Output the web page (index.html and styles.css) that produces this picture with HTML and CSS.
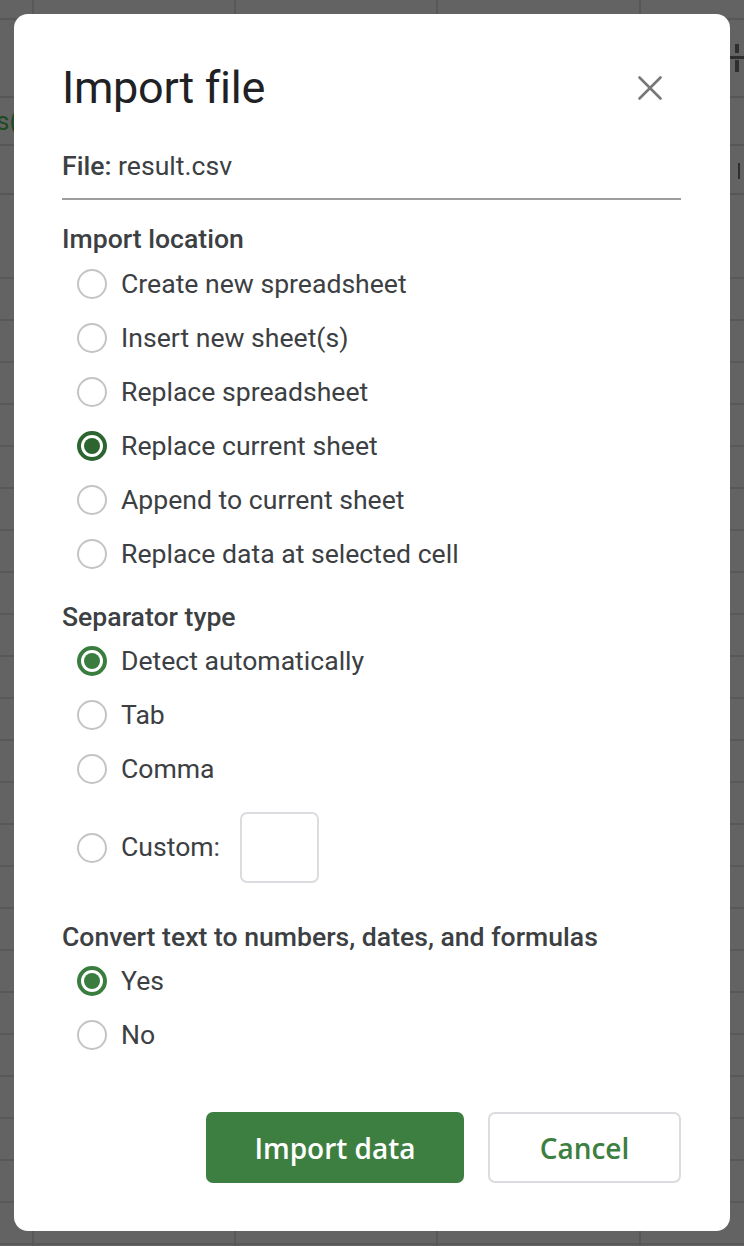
FILE: index.html
```html
<!DOCTYPE html>
<html lang="en">
<head>
<meta charset="utf-8">
<title>Import file</title>
<link rel="stylesheet" href="styles.css">
</head>
<body>
<div class="sheet">
  <div class="peek-text">s(</div>
  <div class="peek-cross"><span class="pc-v"></span><span class="pc-h"></span></div>
  <div class="peek-bar"></div>

  <div class="dialog" role="dialog" aria-labelledby="dlg-title">
    <div class="dialog-header">
      <h1 id="dlg-title" class="dialog-title">Import file</h1>
      <button class="close-btn" aria-label="Close">
        <svg width="40" height="40" viewBox="0 0 40 40" aria-hidden="true">
          <path d="M9.5 9.5 L30.5 30.5 M30.5 9.5 L9.5 30.5" stroke="#777" stroke-width="2.6" stroke-linecap="round" fill="none"/>
        </svg>
      </button>
    </div>

    <div class="file-row"><b>File:</b> result.csv</div>

    <h2 class="section-title first">Import location</h2>
    <ul class="radio-list">
      <li class="radio-row"><span class="radio"></span><span class="label">Create new spreadsheet</span></li>
      <li class="radio-row"><span class="radio"></span><span class="label">Insert new sheet(s)</span></li>
      <li class="radio-row"><span class="radio"></span><span class="label">Replace spreadsheet</span></li>
      <li class="radio-row"><span class="radio checked focused"></span><span class="label">Replace current sheet</span></li>
      <li class="radio-row"><span class="radio"></span><span class="label">Append to current sheet</span></li>
      <li class="radio-row"><span class="radio"></span><span class="label">Replace data at selected cell</span></li>
    </ul>

    <h2 class="section-title sep">Separator type</h2>
    <ul class="radio-list">
      <li class="radio-row"><span class="radio checked"></span><span class="label">Detect automatically</span></li>
      <li class="radio-row"><span class="radio"></span><span class="label">Tab</span></li>
      <li class="radio-row"><span class="radio"></span><span class="label">Comma</span></li>
      <li class="radio-row custom-row"><span class="radio"></span><span class="label">Custom:</span><span class="custom-input"></span></li>
    </ul>

    <h2 class="section-title conv">Convert text to numbers, dates, and formulas</h2>
    <ul class="radio-list">
      <li class="radio-row"><span class="radio checked"></span><span class="label">Yes</span></li>
      <li class="radio-row"><span class="radio"></span><span class="label">No</span></li>
    </ul>

    <div class="actions">
      <button class="btn btn-primary">Import data</button>
      <button class="btn btn-secondary">Cancel</button>
    </div>
  </div>
</div>
</body>
</html>
```

FILE: styles.css
```css
html, body {
  margin: 0;
  padding: 0;
}

body {
  width: 744px;
  height: 1246px;
  overflow: hidden;
  font-family: Roboto, "Liberation Sans", Arial, sans-serif;
}

.sheet {
  position: relative;
  width: 744px;
  height: 1246px;
  background-color: #636363;
  background-image:
    linear-gradient(to bottom, transparent 18px, #575757 18px, #575757 20px, transparent 20px,
      transparent 96px, #575757 96px, #575757 98px, transparent 98px,
      transparent 144px, #575757 144px, #575757 146px, transparent 146px,
      transparent 193px, #575757 193px, #575757 195px, transparent 195px),
    repeating-linear-gradient(to bottom, transparent 0, transparent 40px, #585858 40px, #585858 42px),
    linear-gradient(to right, transparent 32px, #585858 32px, #585858 34px, transparent 34px,
      transparent 234px, #585858 234px, #585858 236px, transparent 236px,
      transparent 436px, #585858 436px, #585858 438px, transparent 438px,
      transparent 639px, #585858 639px, #585858 641px, transparent 641px);
  background-size: 744px 240px, 744px 1009px, 744px 100%;
  background-position: 0 0, 0 237px, 0 0;
  background-repeat: no-repeat;
}

.peek-text {
  position: absolute;
  left: -4px;
  top: 105px;
  font-size: 26px;
  line-height: 32px;
  color: #1f4a22;
}

.peek-cross {
  position: absolute;
  left: 730px;
  top: 44px;
  width: 14px;
  height: 28px;
}
.pc-v {
  position: absolute;
  left: 5px;
  top: 0;
  width: 4px;
  height: 28px;
  background: linear-gradient(to bottom, #2e2e2e 0, #2e2e2e 9px, transparent 9px, transparent 16px, #2e2e2e 16px);
}
.pc-h {
  position: absolute;
  left: 0;
  top: 12px;
  width: 14px;
  height: 3px;
  background: #2e2e2e;
}
.peek-bar {
  position: absolute;
  left: 738px;
  top: 163px;
  width: 2px;
  height: 16px;
  background: #2e2e2e;
}

.dialog {
  position: absolute;
  left: 14px;
  top: 14px;
  width: 716px;
  height: 1217px;
  box-sizing: border-box;
  background: #ffffff;
  border-radius: 14px;
  padding: 0 49px 48px 48px;
  display: flex;
  flex-direction: column;
}

.dialog-header {
  display: flex;
  align-items: center;
  justify-content: space-between;
  height: 48px;
  margin-top: 50px;
}

.dialog-title {
  margin: 0;
  font-family: Roboto, "Liberation Sans", sans-serif;
  font-weight: 400;
  font-size: 45px;
  line-height: 48px;
  letter-spacing: -0.3px;
  color: #202124;
}

.close-btn {
  border: 0;
  background: transparent;
  padding: 0;
  margin-right: 11px;
  width: 40px;
  height: 40px;
  display: flex;
}

.file-row {
  margin-top: 38px;
  font-size: 26.6px;
  line-height: 32px;
  color: #3c4043;
  padding-bottom: 16px;
  border-bottom: 2px solid #9e9e9e;
}
.file-row b {
  font-weight: 500;
}

.section-title {
  margin: 0;
  font-size: 26.6px;
  line-height: 32px;
  font-weight: 500;
  color: #3c4043;
}
.section-title.first { margin-top: 23px; }
.section-title.sep { margin-top: 20px; }
.section-title.conv { margin-top: 22px; }

.radio-list {
  list-style: none;
  margin: 0;
  padding: 0;
}
.section-title.first + .radio-list { margin-top: 2px; }
.section-title.sep + .radio-list,
.section-title.conv + .radio-list { margin-top: 1px; }

.radio-row {
  display: flex;
  align-items: center;
  height: 54px;
  padding-left: 15px;
  font-size: 26.6px;
  color: #3c4043;
}
.radio-row .label {
  position: relative;
  top: -1px;
}

.radio {
  width: 30px;
  height: 30px;
  box-sizing: border-box;
  border: 2px solid #c4c4c4;
  border-radius: 50%;
  flex-shrink: 0;
  margin-right: 14px;
  position: relative;
}
.radio.checked {
  border: 4px solid #3a7d3e;
}
.radio.checked::after {
  content: "";
  position: absolute;
  left: 3px;
  top: 3px;
  width: 16px;
  height: 16px;
  border-radius: 50%;
  background: #3a7d3e;
}
.radio.checked.focused {
  border-color: #2c6530;
}
.radio.checked.focused::after {
  background: #2c6530;
}

.custom-row {
  height: auto;
  padding-top: 16px;
  padding-bottom: 16px;
}
.custom-input {
  width: 79px;
  height: 71px;
  box-sizing: border-box;
  border: 2px solid #dadce0;
  border-radius: 7px;
  margin-left: 20px;
}

.actions {
  margin-top: auto;
  display: flex;
  justify-content: flex-end;
  gap: 24px;
}

.btn {
  height: 71px;
  box-sizing: border-box;
  border-radius: 7px;
  font-family: "Open Sans", Roboto, sans-serif;
  font-size: 28px;
  font-weight: 600;
  padding: 0;
  cursor: pointer;
}
.btn-primary {
  width: 258px;
  background: #3d7f41;
  border: 0;
  color: #ffffff;
}
.btn-secondary {
  width: 193px;
  background: #ffffff;
  border: 2px solid #dadce0;
  color: #3d7f41;
}
```
